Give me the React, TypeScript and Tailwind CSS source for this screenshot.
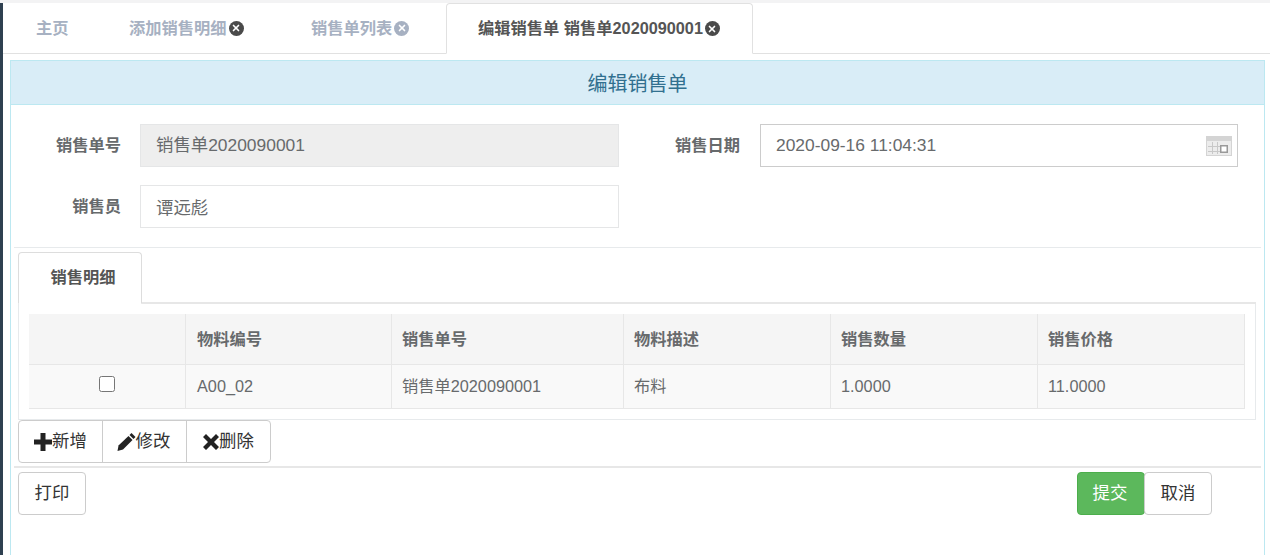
import { X } from 'lucide-react';

const columns = ['', '物料编号', '销售单号', '物料描述', '销售数量', '销售价格'];
const row = ['A00_02', '销售单2020090001', '布料', '1.0000', '11.0000'];

function CloseDot({ light, className }: { light?: boolean; className?: string }) {
  return (
    <span
      className={`inline-flex h-[15px] w-[15px] items-center justify-center rounded-full ${
        light ? 'bg-[#a7b1c2]' : 'bg-[#4a4a4a]'
      } ${className ?? 'ml-px'}`}
    >
      <X size={10} strokeWidth={4} color="#fff" />
    </span>
  );
}

function CalendarIcon() {
  return (
    <svg width="26" height="20" viewBox="0 0 26 20" className="block">
      <rect width="26" height="20" fill="#d4d4d4" />
      <rect x="1" y="5" width="24" height="14" fill="#ececec" />
      <path d="M2 10.5h12M2 15.5h12M6.5 6v12M11.5 6v12" stroke="#c8c8c8" fill="none" />
      <rect x="14.750" y="9.750" width="6.500" height="6.500" fill="#fff" stroke="#999" strokeWidth="1.500" />
    </svg>
  );
}

function PlusIcon() {
  return (
    <svg width="18" height="18" viewBox="0 0 18 18" className="block shrink-0" fill="#222">
      <path d="M6.5 0h5v6.500H18v5h-6.500V18h-5v-6.500H0v-5h6.500z" />
    </svg>
  );
}

function PencilIcon() {
  return (
    <svg width="19" height="18" viewBox="0 0 18 18" className="block shrink-0" fill="#222">
      <path d="M0 18l1-5.500L11 3l4 4-9.500 9.500z" />
      <path d="M12 2l2-2 4 4-2 2z" />
    </svg>
  );
}

function CrossIcon() {
  return (
    <svg width="16" height="16" viewBox="0 0 16 16" className="block shrink-0" fill="#222">
      <path d="M3 0l5 5 5-5 3 3-5 5 5 5-3 3-5-5-5 5-3-3 5-5-5-5z" />
    </svg>
  );
}

export default function App() {
  return (
    <div className="h-[555px] w-[1270px] overflow-hidden bg-white font-['Liberation_Sans','Noto_Sans_CJK_SC',sans-serif] text-[16.25px] text-[#676a6c]">
      <div className="h-[3px] bg-[#f3f3f4]" />
      <div className="flex h-[552px]">
        <div className="w-[3px] bg-[#2f4050]" />
        <div className="min-w-0 flex-1">
          {/* tabs */}
          <div className="flex h-[51px] border-b border-[#e1e1e1] pl-[33px] font-bold">
            <div className="flex h-[50px] w-[93px] items-center text-[#a7b1c2]">主页</div>
            <div className="flex h-[50px] w-[182px] items-center text-[#a7b1c2]">
              添加销售明细
              <CloseDot className="ml-[2px]" />
            </div>
            <div className="flex h-[50px] w-[135px] items-center text-[#a7b1c2]">
              销售单列表
              <CloseDot light className="ml-[2px]" />
            </div>
            <div className="flex h-[51px] w-[307px] items-center justify-center rounded-t border border-b-white border-[#e1e1e1] bg-white pr-[1px] text-[#555]">
              编辑销售单 销售单2020090001
              <CloseDot className="ml-[2px]" />
            </div>
          </div>

          {/* panel */}
          <div className="mt-[6px] ml-[7px] mr-[5px] h-[495px] border-x border-t border-[#bce8f1]">
            <div className="flex h-[44px] items-center justify-center border-b border-[#bce8f1] bg-[#d9edf7] pt-[2px] text-[20px] text-[#31708f]">
              编辑销售单
            </div>

            <div className="h-[142px] pt-[19px]">
              <div className="flex h-[43px]">
                <div className="flex w-[110px] items-center justify-end pb-[1px] font-bold">销售单号</div>
                <div className="ml-[19px] flex w-[479px] items-center border border-[#e5e6e7] bg-[#eeeeee] px-[15px] text-[17.4px]">
                  销售单2020090001
                </div>
                <div className="ml-[56px] flex w-[65px] items-center justify-end pb-[1px] font-bold">销售日期</div>
                <div className="ml-[20px] flex w-[478px] items-center justify-between border border-[#cccccc] pr-[5px] pl-[15px] text-[17.4px]">
                  2020-09-16 11:04:31
                  <CalendarIcon />
                </div>
              </div>
              <div className="mt-[18px] flex h-[43px]">
                <div className="flex w-[110px] items-center justify-end font-bold">销售员</div>
                <div className="ml-[19px] flex w-[479px] items-center border border-[#e5e6e7] px-[15px] pt-[4px] text-[17.4px]">
                  谭远彪
                </div>
              </div>
            </div>

            <div className="ml-[3px] mr-[3px] h-px bg-[#e7eaec]" />

            <div className="ml-[7px] mr-[8px]">
              <div className="mt-[4px] flex h-[52px] border-b-2 border-[#e7e7e7]">
                <div className="flex h-[52px] w-[124px] items-center justify-center rounded-t border border-b-white border-[#dddddd] bg-white pb-[2px] pl-[6px] font-bold text-[#555]">
                  销售明细
                </div>
              </div>

              <div className="h-[116px] border-x border-b border-[#e7eaec] px-[10px] pt-[10px]">
                <div className="grid grid-cols-[157px_206px_232px_207px_207px_207px]">
                  {columns.map((c, i) => (
                    <div
                      key={i}
                      className={`flex h-[51px] items-center border-b border-r border-[#e7e7e7] bg-[#f5f5f5] font-bold ${
                        i === 1 ? 'pl-[11px]' : 'pl-[10px]'
                      }`}
                    >
                      {c}
                    </div>
                  ))}
                  <div className="flex h-[44px] items-center justify-center border-b border-r border-[#e7e7e7] bg-[#f9f9f9]">
                    <input type="checkbox" className="mb-[6px] h-[16px] w-[16px]" />
                  </div>
                  {row.map((c, i) => (
                    <div
                      key={i}
                      className={`flex h-[44px] items-center border-b border-r border-[#e7e7e7] bg-[#f9f9f9] ${
                        i === 0 ? 'pl-[11px]' : 'pl-[10px]'
                      }`}
                    >
                      {c}
                    </div>
                  ))}
                </div>
              </div>

              <div className="flex text-[17.4px] text-[#333]">
                <div className="flex h-[43px] w-[85px] items-center justify-center rounded-l border border-[#cccccc]">
                  <PlusIcon />
                  新增
                </div>
                <div className="-ml-px flex h-[43px] w-[85px] items-center justify-center border border-[#cccccc] pr-[2px]">
                  <PencilIcon />
                  修改
                </div>
                <div className="-ml-px flex h-[43px] w-[85px] items-center justify-center rounded-r border border-[#cccccc]">
                  <CrossIcon />
                  删除
                </div>
              </div>
            </div>

            <div className="mt-[3px] ml-[3px] mr-[3px] h-[2px] bg-[#e7e7e7]" />

            <div className="ml-[7px] mt-[4px] flex justify-between pr-[52px] text-[17.4px] text-[#333]">
              <div className="flex h-[43px] w-[68px] items-center justify-center rounded border border-[#cccccc]">打印</div>
              <div className="flex">
                <div className="flex h-[43px] w-[68px] items-center justify-center rounded border border-[#4cae4c] bg-[#5cb85c] pr-[2px] text-white">
                  提交
                </div>
                <div className="-ml-px flex h-[43px] w-[68px] items-center justify-center rounded border border-[#cccccc]">
                  取消
                </div>
              </div>
            </div>
          </div>
        </div>
      </div>
    </div>
  );
}
